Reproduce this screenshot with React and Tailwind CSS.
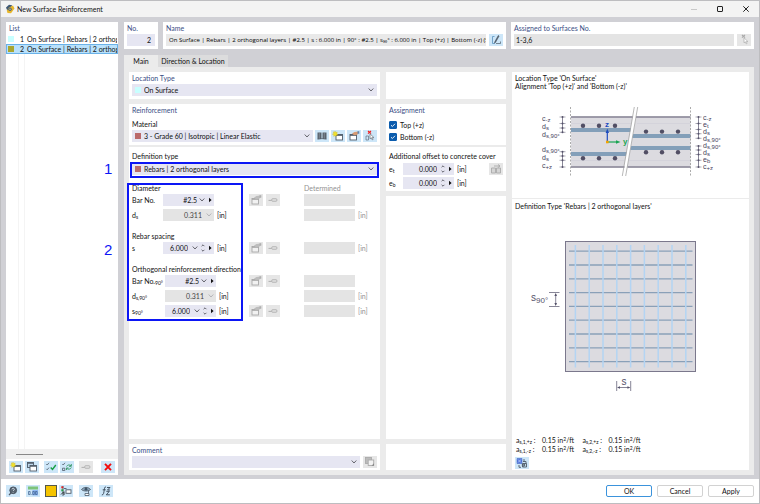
import { useState } from 'react';
import clsx from 'clsx';

const ROWS = [
  { no: 1, color: 'bg-[#c8ffff]', text: 'On Surface | Rebars | 2 orthogonal layers' },
  { no: 2, color: 'bg-[#a9a62f]', text: 'On Surface | Rebars | 2 orthogonal layers' },
];

const GRID_LINES = [0, 1, 2, 3, 4, 5, 6, 7, 8];

/* ---------- icons ---------- */

function Chevron({ muted }) {
  return (
    <svg viewBox="0 0 8 6" className={clsx('w-2 h-1.5 shrink-0', muted ? 'text-[#b5b5b9]' : 'text-[#66666e]')}>
      <path d="M1.7 1.5 4 4l2.3-2.5" fill="none" stroke="currentColor" strokeWidth="1" />
    </svg>
  );
}

function Spin() {
  return (
    <svg viewBox="0 0 6 10" className="w-1.5 h-2.5 shrink-0">
      <path d="M1.6 3.2 3 1.800l1.400 1.400M1.600 6.800 3 8.200l1.400-1.400" fill="none" stroke="#55555d" strokeWidth=".9" />
    </svg>
  );
}

function Play() {
  return (
    <svg viewBox="0 0 6 6" className="w-1.5 h-1.5 shrink-0">
      <path d="M2 .8v4.400l2.600-2.200z" fill="#111" />
    </svg>
  );
}

function Svg({ children }) {
  return (
    <svg viewBox="0 0 14 12" className="w-3.5 h-3" fill="none" stroke="#4f5b68" strokeWidth=".9">
      {children}
    </svg>
  );
}

const BookIcon = () => (
  <Svg>
    <path d="M2.500 2.500h4v6.500h-4zM7.500 2.500h4v6.500h-4z" fill="#59626c" stroke="none" />
    <path d="M4.300 2.500v6.500M9.300 2.500v6.500" stroke="#a5adb5" strokeWidth=".5" />
    <path d="M2.500 9.300 7 8.600l4.500.7" strokeWidth=".7" />
  </Svg>
);

const NewIcon = () => (
  <Svg>
    <rect x="5" y="4.500" width="6.500" height="5.500" fill="#fff" />
    <path d="M5 5.200h6.500" strokeWidth="1.300" />
    <path d="m4 1 .7 1.500 1.600-.4-.6 1.500 1.300 1-1.600.3-.2 1.700L4 5.500 2.700 6.400l.1-1.700-1.500-.5 1.400-.8-.5-1.600 1.400.4z" fill="#f2e12b" stroke="#c5ac18" strokeWidth=".3" />
  </Svg>
);

const EditIcon = ({ muted }) => (
  <Svg>
    <rect x="3" y="4.500" width="6.500" height="5.500" fill={muted ? '#f1f1f1' : '#fff'} stroke={muted ? '#a8a8a8' : '#4f5b68'} />
    <path d="M3 5.200h6.500" strokeWidth="1.300" stroke={muted ? '#a8a8a8' : '#4f5b68'} />
    <path d="M5 3.500 7.500 2l4-.5v2.200L9.500 5 7 5.200z" fill={muted ? '#bdbdbd' : '#d69a72'} stroke="none" />
    <path d="M10.500 1.200h1.800v2.500h-1.800z" fill={muted ? '#b0b0b0' : '#5c87b5'} stroke="none" />
  </Svg>
);

const PickIcon = ({ muted }) => (
  <Svg>
    <path d="m5 1 3 2.700M8 1 5 3.700" stroke={muted ? '#aaa' : '#ef2020'} strokeWidth="1.100" />
    <path d="M7 3.800v5l1.300-1 .9 2 .9-.4-.8-1.900h1.600z" fill="#fff" stroke={muted ? '#aaa' : '#666f78'} strokeWidth=".7" />
    {!muted && <path d="M3 6h2.500v4H3z" strokeWidth=".6" />}
  </Svg>
);

const KeyIcon = () => (
  <Svg>
    <path d="M2.500 6.400h3.200" stroke="#aaa" />
    <rect x="5.800" y="4.800" width="5" height="2.400" rx=".6" stroke="#aaa" fill="#e8e8e8" />
  </Svg>
);

const CopyIcon = () => (
  <Svg>
    <rect x="2.500" y="1.500" width="6" height="5" fill="#bdd6ea" />
    <rect x="5" y="4.500" width="6.500" height="5.500" fill="#fff" />
    <path d="M5 5.200h6.500M2.500 2.100h6" strokeWidth="1.200" />
  </Svg>
);

const GiftIcon = () => (
  <Svg>
    <path d="M2.500 5h4v5h-4zM7.500 5h4v5h-4z" fill="#d5d5d5" stroke="#aaa" />
    <path d="M5 3h6M9 1.500 11 3 9 4.500" stroke="#aaa" />
  </Svg>
);

const StackIcon = () => (
  <Svg>
    <rect x="2.500" y="1.500" width="6" height="6" fill="#bbb" stroke="#aaa" />
    <rect x="5.200" y="4" width="5.500" height="5.500" fill="#f2f2f2" stroke="#aaa" />
    <path d="M8.500 9.800h2.500V7.200z" fill="#888" stroke="none" />
  </Svg>
);

const NameEditIcon = () => (
  <Svg>
    <path d="M5.500 2.500H3.500v7h2.500" stroke="#5c93be" strokeWidth=".8" />
    <path d="M9.300 1.500 5.800 7.800 5.500 9l1-.6 3.600-6.400z" fill="#4f5b68" strokeWidth=".6" />
    <path d="M7 9.500h4.500V7.500" strokeWidth=".7" />
  </Svg>
);

const CheckAllIcon = () => (
  <Svg>
    <path d="m2.300 3 .9 1L5 1.800M2.300 7.800l.9 1L5 6.600" strokeWidth=".8" />
    <path d="m6.700 6.500 1.800 2L11.800 4" stroke="#16a046" strokeWidth="1.400" />
  </Svg>
);

const CheckSwapIcon = () => (
  <Svg>
    <path d="m2.300 3 .9 1L5 1.800M2.500 7.200h2.300v2.300H2.500z" strokeWidth=".8" />
    <path d="M6.500 5.500C7.500 3.500 10 3.500 11 5M11.300 6.500c-.8 2-3.300 2.200-4.500.8M11.300 3v2.300H9M6.500 9V7h2" stroke="#329764" strokeWidth=".9" />
  </Svg>
);

const DeleteIcon = () => (
  <Svg>
    <path d="m4 2.800 6 6.400M10 2.800 4 9.200" stroke="#f20d0d" strokeWidth="1.900" />
  </Svg>
);

const HelpIcon = () => (
  <Svg>
    <path d="M3 10 5.500 7.500" strokeWidth="1.300" />
    <circle cx="7.200" cy="5.300" r="3.400" fill="#596673" stroke="#45505c" />
    <path d="M6 4.300c.2-1.400 2.500-1.200 2.300.1-.1.700-1 .8-1.100 1.600M7.100 7v.6" stroke="#e8f3fb" strokeWidth=".8" />
  </Svg>
);

const UnitsIcon = () => (
  <Svg>
    <path d="M2 1.500h10v3H2z" fill="#7cc47a" stroke="none" />
    <path d="M6.500 5H12v5.500H6.500z" fill="#8fb8f4" stroke="none" />
    <path d="M2.500 6.500h1.600V9.500H2.500zM5.300 9v.7M6.700 6.500h1.600V9.500H6.700zM9.500 6.500h1.600V9.500H9.500z" stroke="#3c5f8c" strokeWidth=".7" />
  </Svg>
);

const DisplayIcon = () => (
  <Svg>
    <path d="M4 1v10" strokeWidth=".9" />
    <path d="M2.300 1.300h2v2h-2z" fill="#d22" stroke="none" />
    <path d="M2.300 4.300h2v2h-2z" fill="#27a344" stroke="none" />
    <path d="M2 9.500 5 6.500M5 10V7" stroke="#222" />
    <rect x="7" y="4.800" width="5" height="3.500" fill="#fff" />
    <path d="M5 3.500h2.500" />
  </Svg>
);

const ViewIcon = () => (
  <Svg>
    <path d="M2.500 4.500C4.500 1.700 9.500 1.700 11.500 4.500C9.500 6.500 4.500 6.500 2.500 4.500z" fill="#8ba6bd" />
    <circle cx="7" cy="4.200" r="1.400" fill="#3e5468" stroke="none" />
    <path d="M6 8.500h4v2H6zM9.500 5.500v3" fill="#fff" strokeWidth=".8" />
  </Svg>
);

const FormulaIcon = () => (
  <Svg>
    <path d="M7 2C5.500 1.500 5.500 3.500 5.200 5c-.4 2.500-.4 5-2.400 5M3.700 4.800h3M7.300 6.300h3L7.300 9.800h3.500M8 2.500h3L8.500 5H11" stroke="#354453" />
  </Svg>
);

const ZoomModelIcon = () => (
  <Svg>
    <path d="M2 1.500h5v5H2z" fill="#5579dd" stroke="#3c60c0" strokeWidth=".5" />
    <path d="M3 2.500 6 5.500M6 2.500 3 5.500" stroke="#d8e5ff" strokeWidth=".6" />
    <path d="M4 8v2.300h2M9 2v2.500M8 4.500h3v2M7.500 6.500h4v3.500h-4z" strokeWidth=".9" />
    <circle cx="8.500" cy="8" r="1.300" fill="#8194a5" />
  </Svg>
);

function AppLogo() {
  return (
    <svg viewBox="0 0 10 10" className="w-2.5 h-2.5 shrink-0">
      <path d="M1 3.500 4 .8l3 .5-1 4-3.500 1.700z" fill="#3f5874" />
      <path d="M4 3.500 8 1.500l1.500 3L6 9.300 2.500 9l-.7-2.300z" fill="#e8b72b" />
      <circle cx="5" cy="5.300" r="1.700" fill="#48617f" />
      <circle cx="5" cy="5.300" r=".7" fill="#f1d878" />
    </svg>
  );
}

/* ---------- controls ---------- */

function IconButton({ label, disabled, children }) {
  return (
    <button
      type="button"
      aria-label={label}
      disabled={disabled}
      className={clsx('flex h-3 w-3.5 shrink-0 items-center justify-center', disabled ? 'bg-[#e6e6e6]' : 'bg-[#cde6f8]')}
    >
      {children}
    </button>
  );
}

function Card({ className, children }) {
  return <section className={clsx('bg-white px-[3px]', className)}>{children}</section>;
}

function Title({ children, className }) {
  return <h2 className={clsx('h-3 leading-3 text-[#3a4e85]', className)}>{children}</h2>;
}

function Select({ label, swatch, value }) {
  return (
    <div className="flex h-3 min-w-0 flex-1 items-center bg-[#e6e6f2] pr-0.5">
      {swatch && <span className={clsx('ml-[3px] mr-[3px] h-1.5 w-1.5 shrink-0', swatch)} />}
      <select aria-label={label} className="h-3 min-w-0 flex-1 appearance-none bg-transparent leading-3 outline-none">
        <option>{value}</option>
      </select>
      <Chevron />
    </div>
  );
}

function NumberField({ label, value, readOnly, list, spin, play }) {
  return (
    <div className={clsx('flex h-3 w-[51px] items-center gap-px pr-px', readOnly ? 'bg-[#e4e4e4]' : 'bg-[#e6e6f2]')}>
      <input
        aria-label={label}
        defaultValue={value}
        readOnly={readOnly}
        className={clsx(
          'h-3 w-0 min-w-0 flex-1 bg-transparent text-right outline-none',
          (spin || readOnly) && 'pr-[2px]',
          readOnly && 'text-[#444]',
        )}
      />
      {list && <Chevron muted={readOnly} />}
      {spin && <Spin />}
      {play && <Play />}
    </div>
  );
}

function ParamRow({ name, label, unit, tools, indent, ...field }) {
  return (
    <div className="flex h-3 items-center">
      <span className={clsx('shrink-0 whitespace-nowrap', indent ? 'w-[33px]' : 'w-[31px]')}>{name}</span>
      <NumberField label={label} {...field} />
      <span className={clsx('shrink-0 pl-[3px]', indent ? 'w-[33px]' : 'w-[35px]')}>{unit}</span>
      <div className="flex w-[55px] shrink-0 gap-[3px]">
        {tools && (
          <>
            <IconButton label={`Edit ${label}`} disabled><EditIcon muted /></IconButton>
            <IconButton label={`Fix ${label}`} disabled><KeyIcon /></IconButton>
          </>
        )}
      </div>
      <input aria-label={`Determined ${label}`} disabled className="h-3 w-[51px] bg-[#e4e4e4]" />
      <span className="pl-[3px] text-[#929292]">{unit}</span>
    </div>
  );
}

function Sub({ children }) {
  return <sub className="bottom-[-1px] text-[5px]">{children}</sub>;
}

function Check({ label }) {
  return (
    <label className="flex h-3 items-center gap-[3px]">
      <span className="relative flex h-2 w-2">
        <input type="checkbox" defaultChecked className="peer h-2 w-2 appearance-none rounded-[1px] border border-[#0b5cad] bg-white checked:bg-[#0b5cad]" />
        <svg viewBox="0 0 8 8" className="pointer-events-none absolute inset-0 hidden h-2 w-2 peer-checked:block">
          <path d="M2 4.200 3.400 5.500 6 2.800" fill="none" stroke="#fff" strokeWidth=".9" />
        </svg>
      </span>
      {label}
    </label>
  );
}

/* ---------- drawings ---------- */

function DimLabel({ x, y, base, sub }) {
  return (
    <text x={x} y={y} fontSize="7" fill="#45425c">
      {base}
      <tspan dy="1" fontSize="6">{sub}</tspan>
    </text>
  );
}

function Dimension({ x, points }) {
  return (
    <g stroke="#55526a" fill="#55526a">
      <path d={`M${x} ${points[0]}V${points[points.length - 1]}`} strokeWidth=".7" />
      {points.map((y) => (
        <g key={y}>
          <path d={`M${x - 3} ${y}h6`} strokeWidth=".5" />
          <circle cx={x} cy={y} r="1" stroke="none" />
        </g>
      ))}
    </g>
  );
}

function SectionDrawing() {
  return (
    <svg viewBox="540 104 184 76" className="ml-[25px] h-[76px] w-[184px] font-['Liberation_Sans',sans-serif]">
      <path d="M571 116.500h61.700l-8.800 51H571zM636.200 116.500H690.500v51H627.300z" fill="#dcdbe0" />
      <path d="M571 123.500h60M637 123.500h53M571 160.500h53M629 160.500h61" stroke="#cfced6" strokeWidth=".6" />
      <path d="M571 117h61.700M636 117h54.500M571 167h53.500M627.500 167h63" stroke="#858294" strokeWidth="1.600" />
      <path d="M571 128h59.800l-.7 4H571zM571 152h55.500l-.7 4H571zM633.200 134H690.500v4h-58zM631.200 146H690.500v4h-60z" fill="#839fb9" />
      <path d="M634.300 107 622.300 176M637.700 107 625.700 176" stroke="#999" strokeWidth=".7" />
      <path d="M570.500 107v69M690.500 107v69" stroke="#888" strokeWidth=".7" strokeDasharray="2 1.500" />
      {[583, 599, 615].map((x) => (
        <g key={x} fill="#514e64">
          <circle cx={x} cy="125.700" r="2.200" />
          <circle cx={x} cy="158.300" r="2.200" />
          <circle cx={x + 63} cy="131.600" r="2.200" />
          <circle cx={x + 63} cy="152.300" r="2.200" />
        </g>
      ))}
      <path d="M607.300 141v-9" stroke="#1d4bc0" strokeWidth="1.200" />
      <path d="m607.300 128.500 1.700 4.500h-3.400z" fill="#1d4bc0" />
      <path d="M608 142h9" stroke="#1aa553" strokeWidth="1.200" />
      <path d="m620.500 142-4.500 1.700v-3.400z" fill="#1aa553" />
      <path d="M606 140.700h2.600v2.600H606z" fill="#f5a400" />
      <text x="605" y="127" fontSize="8" fontWeight="bold" fill="#1d4bc0">z</text>
      <text x="623" y="144" fontSize="8" fontWeight="bold" fill="#1aa553">y</text>

      <Dimension x={562.500} points={[117, 123.500, 128, 132.300]} />
      <Dimension x={562.500} points={[151.700, 156, 160.300, 167]} />
      <Dimension x={698.500} points={[117, 123.500, 129.500, 133.700, 138.300]} />
      <Dimension x={698.500} points={[146, 150, 154.500, 160.300, 167]} />
      <DimLabel x={542} y={121} base="c" sub="-z" />
      <DimLabel x={542} y={129} base="d" sub="s" />
      <DimLabel x={542} y={137} base="d" sub="s,90°" />
      <DimLabel x={542} y={152} base="d" sub="s,90°" />
      <DimLabel x={542} y={160} base="d" sub="s" />
      <DimLabel x={542} y={168} base="c" sub="+z" />
      <DimLabel x={703} y={120} base="c" sub="-z" />
      <DimLabel x={703} y={127} base="e" sub="t" />
      <DimLabel x={703} y={134} base="d" sub="s" />
      <DimLabel x={703} y={141} base="d" sub="s,90°" />
      <DimLabel x={703} y={148} base="d" sub="s,90°" />
      <DimLabel x={703} y={155} base="d" sub="s" />
      <DimLabel x={703} y={162} base="e" sub="b" />
      <DimLabel x={703} y={169} base="c" sub="+z" />
    </svg>
  );
}

function PlanDrawing() {
  return (
    <svg viewBox="530 240 168 154" className="ml-[15px] h-[154px] w-[168px] font-['Liberation_Sans',sans-serif]">
      <rect x="565.500" y="241.500" width="130" height="130" fill="#dcdbe0" stroke="#7b788c" />
      {GRID_LINES.map((i) => (
        <path key={i} d={`M569 ${251.200 + i * 13.800}h123.500`} stroke="#8aa0b8" strokeWidth="1.300" />
      ))}
      {GRID_LINES.map((i) => (
        <path key={i} d={`M${575.400 + i * 13.800} 245v122.500`} stroke="#b3d4f3" strokeWidth="1.500" />
      ))}
      <g stroke="#55526a" strokeWidth=".7" fill="#55526a">
        <path d="M549 292.500h10.500M549 306.500h10.500M555.700 294v11M616.700 381v10M630.700 381v10M618 387.500h11" />
        <path d="m555.700 293 1.300 3h-2.600zM555.700 306l1.300-3h-2.600zM617 387.500l3 1.300v-2.600zM630.400 387.500l-3 1.300v-2.600z" stroke="none" />
      </g>
      <text x="531" y="301" fontSize="10" fill="#55526a">
        s<tspan dy="2" fontSize="8">90°</tspan>
      </text>
      <text x="621.500" y="385" fontSize="10" fill="#55526a">s</text>
    </svg>
  );
}

function Area({ index }) {
  return (
    <p className="flex h-2 items-center whitespace-nowrap">
      <span className="w-[26px]">a<Sub>s,{index}</Sub> :</span>
      <span>0.15 in<sup className="top-[-2px] text-[5px]">2</sup>/ft</span>
    </p>
  );
}

/* ---------- page ---------- */

export default function App() {
  const [selected, setSelected] = useState(2);

  return (
    <div className="flex min-h-screen flex-col border border-[#bdbdc0] bg-white font-['Lato','Noto_Sans',sans-serif] text-[7px] leading-[8px] text-[#111]">
      <header className="flex h-4 items-center bg-[#f3f3f3] pl-1">
        <AppLogo />
        <h1 className="ml-[2px] flex-1 leading-3">New Surface Reinforcement</h1>
        <div className="flex items-center gap-3 pr-1.5">
          <button type="button" aria-label="Minimize" className="flex h-3.5 w-3.5 items-center justify-center">
            <span className="h-px w-1.5 bg-[#c8c8c8]" />
          </button>
          <button type="button" aria-label="Maximize" className="flex h-3.5 w-3.5 items-center justify-center">
            <span className="h-1.5 w-1.5 rounded-[1px] border border-[#222]" />
          </button>
          <button type="button" aria-label="Close" className="flex h-3.5 w-3.5 items-center justify-center">
            <svg viewBox="0 0 8 8" className="h-2 w-2"><path d="m1.300 1.300 5.400 5.400M6.700 1.300 1.300 6.700" stroke="#222" strokeWidth="1" /></svg>
          </button>
        </div>
      </header>

      <main className="flex flex-1 gap-1.5 bg-[#d0d0d5] px-[5px] pt-[5px] pb-1">
        <aside className="relative flex w-28 shrink-0 flex-col bg-white">
          <Title className="px-[3px]">List</Title>
          <ul className="flex flex-1 flex-col">
            {ROWS.map((row) => (
              <li key={row.no}>
                <button
                  type="button"
                  onClick={() => setSelected(row.no)}
                  className={clsx(
                    'flex h-2.5 w-full items-center overflow-hidden border text-left whitespace-nowrap',
                    selected === row.no ? 'border-[#6ab2e8] bg-[#b9e1fb]' : 'border-transparent',
                  )}
                >
                  <span className={clsx('ml-px h-1.5 w-1.5 shrink-0', row.color)} />
                  <span className="w-2.5 shrink-0 text-right">{row.no}</span>
                  <span className="pl-[3px]">{row.text}</span>
                </button>
              </li>
            ))}
            <li className="ml-3 w-[7px] flex-1 border-x border-[#f4f4f4]" />
          </ul>
          <div className="flex h-2.5 items-center bg-[#f0f0f0] pl-2.5">
            <span className="h-px w-[27px] bg-[#888]" />
          </div>
          <div className="flex items-center gap-[2px] px-[3px] py-[2px]">
            <IconButton label="New"><NewIcon /></IconButton>
            <IconButton label="Copy"><CopyIcon /></IconButton>
            <span className="w-px" />
            <IconButton label="Select all"><CheckAllIcon /></IconButton>
            <IconButton label="Invert selection"><CheckSwapIcon /></IconButton>
            <span className="w-px" />
            <IconButton label="Assign" disabled><KeyIcon /></IconButton>
            <span className="flex-1" />
            <IconButton label="Delete"><DeleteIcon /></IconButton>
          </div>
          <span className="absolute top-[139px] left-[98px] text-[15px] leading-4 text-[#0c16f5] font-['Liberation_Sans',sans-serif]">1</span>
          <span className="absolute top-[220px] left-[98px] text-[15px] leading-4 text-[#0c16f5] font-['Liberation_Sans',sans-serif]">2</span>
        </aside>

        <div className="flex min-w-0 flex-1 flex-col">
          <div className="flex h-[27px] gap-[5px]">
            <Card className="w-[34px] shrink-0">
              <Title>No.</Title>
              <input aria-label="No." defaultValue="2" className="h-3 w-full bg-[#e6e6f2] pr-1 text-right outline-none" />
            </Card>
            <Card className="min-w-0 flex-[344]">
              <Title>Name</Title>
              <div className="flex gap-[3px]">
                <input
                  aria-label="Name"
                  readOnly
                  value="On Surface | Rebars | 2 orthogonal layers | #2.5 | s : 6.000 in | 90° : #2.5 | s₉₀° : 6.000 in | Top (+z) | Bottom (-z) (S"
                  className="h-3 min-w-0 flex-1 bg-[#e9e9e9] pl-[3px] font-['Open_Sans','Noto_Sans',sans-serif] text-[6px] text-black outline-none"
                />
                <IconButton label="Edit name"><NameEditIcon /></IconButton>
              </div>
            </Card>
            <Card className="min-w-0 flex-[242]">
              <Title>Assigned to Surfaces No.</Title>
              <div className="flex gap-[3px]">
                <input aria-label="Assigned to Surfaces No." defaultValue="1-3,6" className="h-3 min-w-0 flex-1 bg-[#e4e4e4] pl-[2px] outline-none" />
                <IconButton label="Pick surfaces" disabled><PickIcon muted /></IconButton>
              </div>
            </Card>
          </div>

          <nav className="mt-1.5 flex h-3">
            <button type="button" className="w-[34px] bg-[#ebebeb]">Main</button>
            <button type="button" className="w-[70px] bg-[#dcdcdd] whitespace-nowrap">Direction &amp; Location</button>
          </nav>

          <div className="grid flex-1 grid-cols-[251fr_120fr_237fr] gap-1.5 bg-[#ebebeb] p-[5px]">
            <div className="flex min-w-0 flex-col gap-[5px]">
              <Card className="h-[27px]">
                <Title>Location Type</Title>
                <div className="flex"><Select label="Location Type" swatch="bg-[#c8ffff]" value="On Surface" /></div>
              </Card>

              <div className="flex flex-1 flex-col gap-[2px]">
                <Card className="h-[41px]">
                  <Title>Reinforcement</Title>
                  <h3 className="mt-1 mb-[2px]">Material</h3>
                  <div className="flex gap-[2px]">
                    <Select label="Material" swatch="bg-[#bb6b6b]" value="3 - Grade 60 | Isotropic | Linear Elastic" />
                    <IconButton label="Material library"><BookIcon /></IconButton>
                    <IconButton label="New material"><NewIcon /></IconButton>
                    <IconButton label="Edit material"><EditIcon /></IconButton>
                    <IconButton label="Pick material"><PickIcon /></IconButton>
                  </div>
                </Card>

                <Card className="relative flex-1 pt-[5px]">
                  <h3>Definition type</h3>
                  <div className="mt-[3px] flex"><Select label="Definition type" swatch="bg-[#bb6b6b]" value="Rebars | 2 orthogonal layers" /></div>
                  <div className="mt-[9px] flex">
                    <h3 className="w-[172px]">Diameter</h3>
                    <span className="text-[#929292]">Determined</span>
                  </div>
                  <div className="mt-[2px] flex flex-col gap-[3px]">
                    <ParamRow name="Bar No." label="Bar No." value="#2.5" tools list play />
                    <ParamRow name={<>d<Sub>s</Sub></>} label="Bar diameter" value="0.311" unit="[in]" readOnly list />
                  </div>
                  <h3 className="mt-[11px]">Rebar spacing</h3>
                  <div className="mt-[2px]">
                    <ParamRow name="s" label="Rebar spacing" value="6.000" unit="[in]" tools list spin play />
                  </div>
                  <h3 className="mt-[11px]">Orthogonal reinforcement direction</h3>
                  <div className="mt-[2px] flex flex-col gap-[3px]">
                    <ParamRow indent name={<>Bar No.<Sub>90°</Sub></>} label="Bar No. 90°" value="#2.5" tools list play />
                    <ParamRow indent name={<>d<Sub>s,90°</Sub></>} label="Bar diameter 90°" value="0.311" unit="[in]" readOnly list />
                    <ParamRow indent name={<>s<Sub>90°</Sub></>} label="Rebar spacing 90°" value="6.000" unit="[in]" tools list spin play />
                  </div>
                  <span className="pointer-events-none absolute inset-x-px top-[15px] h-4 border-2 border-[#0c16f5]" />
                  <span className="pointer-events-none absolute top-9 left-[-2px] h-[138px] w-[116px] border-2 border-[#0c16f5]" />
                </Card>
              </div>

              <Card className="h-[26px]">
                <Title>Comment</Title>
                <div className="flex gap-[3px]">
                  <Select label="Comment" value="" />
                  <IconButton label="Comment templates" disabled><StackIcon /></IconButton>
                </div>
              </Card>
            </div>

            <div className="flex min-w-0 flex-col gap-[5px]">
              <Card className="h-[27px]" />
              <div className="flex flex-col gap-[2px]">
                <Card className="h-[41px]">
                  <Title>Assignment</Title>
                  <div className="mt-[3px]">
                    <Check label="Top (+z)" />
                    <Check label="Bottom (-z)" />
                  </div>
                </Card>
                <Card className="h-11 pt-[5px] whitespace-nowrap">
                  <h3>Additional offset to concrete cover</h3>
                  <div className="mt-[3px] flex flex-col gap-[2px]">
                    <div className="flex h-3 items-center">
                      <span className="w-3.5">e<Sub>t</Sub></span>
                      <NumberField label="Offset top" value="0.000" spin play />
                      <span className="flex-1 pl-[3px]">[in]</span>
                      <IconButton label="Offset settings" disabled><GiftIcon /></IconButton>
                    </div>
                    <div className="flex h-3 items-center">
                      <span className="w-3.5">e<Sub>b</Sub></span>
                      <NumberField label="Offset bottom" value="0.000" spin play />
                      <span className="pl-[3px]">[in]</span>
                    </div>
                  </div>
                </Card>
              </div>
              <Card className="flex-1" />
              <Card className="h-[26px]" />
            </div>

            <Card className="flex min-w-0 flex-col">
              <p className="mt-[2px]">Location Type 'On Surface'</p>
              <p>Alignment 'Top (+z)' and 'Bottom (-z)'</p>
              <div className="mt-3.5 mb-[18px]"><SectionDrawing /></div>
              <hr className="-mx-[3px] border-[#ebebeb]" />
              <p className="mt-[3px]">Definition Type 'Rebars | 2 orthogonal layers'</p>
              <div className="mt-[30px] flex-1"><PlanDrawing /></div>
              <div className="grid w-[134px] grid-cols-2 gap-y-px pl-px">
                <Area index="1,+z" />
                <Area index="2,+z" />
                <Area index="1,-z" />
                <Area index="2,-z" />
              </div>
              <div className="mt-1 mb-px">
                <IconButton label="Show details"><ZoomModelIcon /></IconButton>
              </div>
            </Card>
          </div>
        </div>
      </main>

      <footer className="flex h-6 items-center bg-white px-[5px]">
        <div className="flex flex-1 items-center">
          <IconButton label="Help"><HelpIcon /></IconButton>
          <span className="w-1.5" />
          <IconButton label="Units"><UnitsIcon /></IconButton>
          <span className="w-[5px]" />
          <button type="button" aria-label="Color" className="h-3 w-3 border border-[#55584a] bg-[#f5c400]" />
          <span className="w-[2px]" />
          <IconButton label="Display"><DisplayIcon /></IconButton>
          <span className="w-1.5" />
          <IconButton label="View"><ViewIcon /></IconButton>
          <span className="w-1.5" />
          <IconButton label="Formula"><FormulaIcon /></IconButton>
        </div>
        <div className="flex gap-[5px]">
          <button type="button" className="h-3 w-[46px] rounded-[2px] border border-[#3b93dc] bg-white">OK</button>
          <button type="button" className="h-3 w-[46px] rounded-[2px] border border-[#d2d2d2] bg-white">Cancel</button>
          <button type="button" className="h-3 w-[46px] rounded-[2px] border border-[#d2d2d2] bg-white">Apply</button>
        </div>
      </footer>
    </div>
  );
}
